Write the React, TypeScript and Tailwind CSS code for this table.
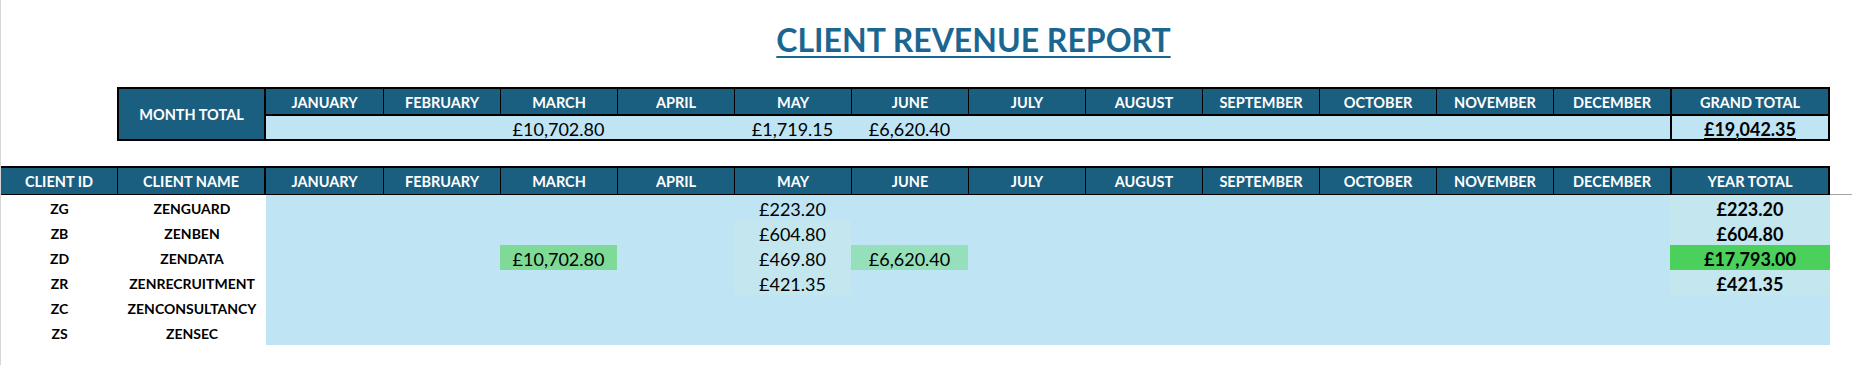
import React from 'react';

const MONTHS = ['JANUARY','FEBRUARY','MARCH','APRIL','MAY','JUNE','JULY','AUGUST','SEPTEMBER','OCTOBER','NOVEMBER','DECEMBER'];

const MONTH_TOTALS: Record<string, string> = { MARCH: '£10,702.80', MAY: '£1,719.15', JUNE: '£6,620.40' };

type Cell = { v: string; bg?: string };
type Row = { id: string; name: string; cells: Record<string, Cell>; total?: Cell };

const ROWS: Row[] = [
  { id: 'ZG', name: 'ZENGUARD', cells: { MAY: { v: '£223.20' } }, total: { v: '£223.20', bg: 'tint' } },
  { id: 'ZB', name: 'ZENBEN', cells: { MAY: { v: '£604.80', bg: 'tint' } }, total: { v: '£604.80', bg: 'tint' } },
  { id: 'ZD', name: 'ZENDATA', cells: { MARCH: { v: '£10,702.80', bg: 'green' }, MAY: { v: '£469.80', bg: 'tint' }, JUNE: { v: '£6,620.40', bg: 'mint' } }, total: { v: '£17,793.00', bg: 'bright' } },
  { id: 'ZR', name: 'ZENRECRUITMENT', cells: { MAY: { v: '£421.35', bg: 'tint' } }, total: { v: '£421.35', bg: 'tint' } },
  { id: 'ZC', name: 'ZENCONSULTANCY', cells: {} },
  { id: 'ZS', name: 'ZENSEC', cells: {} },
];

function bgClass(bg?: string) {
  if (bg === 'green') return 'bg-[#7fd997]';
  if (bg === 'mint') return 'bg-[#95dfba]';
  if (bg === 'bright') return 'bg-[#4bd05b]';
  if (bg === 'tint') return 'bg-[#c3e6ef]';
  return '';
}

export default function App() {
  return (
    <div className="w-[1852px] h-[365px] bg-white border-l border-[#d6d6d6] overflow-hidden [font-family:Lato,'Open_Sans',sans-serif] text-black">
      {/* Title */}
      <div className="ml-[116px] w-[1713px] h-[87px] pt-[24px] flex justify-center">
        <div className="h-[40px] text-[32px] leading-none font-bold text-[#1b6690] underline decoration-2 underline-offset-[4px]">
          CLIENT REVENUE REPORT
        </div>
      </div>

      {/* Month totals table */}
      <div className="ml-[116px] w-[1713px] h-[54px] border-2 border-black flex">
        <div className="w-[147px] border-r-2 border-black bg-[#1a5e80] text-white font-bold text-[14.5px] leading-none flex items-center justify-center pt-[2px]">
          MONTH TOTAL
        </div>
        <div className="w-[1404px] flex flex-col">
          <div className="h-[27px] flex border-b-2 border-black bg-[#1a5e80]">
            {MONTHS.map((m, i) => (
              <div
                key={m}
                className={i > 0 ? 'w-[117px] border-l border-black text-white font-bold text-[14.5px] leading-none flex items-center justify-center pt-[3px]' : 'w-[117px] text-white font-bold text-[14.5px] leading-none flex items-center justify-center pt-[3px]'}
              >
                {m}
              </div>
            ))}
          </div>
          <div className="h-[23px] flex bg-[#bfe4f4]">
            {MONTHS.map((m) => (
              <div key={m} className="w-[117px] flex items-center justify-center pt-[3px] text-[18px] leading-none">
                {MONTH_TOTALS[m] ?? ''}
              </div>
            ))}
          </div>
        </div>
        <div className="flex-1 border-l-2 border-black flex flex-col">
          <div className="h-[27px] border-b-2 border-black bg-[#1a5e80] text-white font-bold text-[14.5px] leading-none flex items-center justify-center pt-[3px]">
            GRAND TOTAL
          </div>
          <div className="h-[23px] bg-[#bfe4f4] flex items-center justify-center pt-[3px] text-[18px] leading-none font-bold">
            <span className="underline decoration-1 underline-offset-[2px]">£19,042.35</span>
          </div>
        </div>
      </div>

      {/* Client table */}
      <div className="mt-[25px] flex">
        <div className="w-[1829px]">
          <div className="h-[29px] flex border-t-2 border-b border-black bg-[#1a5e80] text-white font-bold text-[14.5px] leading-none">
            <div className="w-[117px] border-r border-black flex items-center justify-center pt-[3px]">CLIENT ID</div>
            <div className="w-[148px] border-r-2 border-black flex items-center justify-center pt-[3px]">CLIENT NAME</div>
            {MONTHS.map((m, i) => (
              <div
                key={m}
                className={i > 0 ? 'w-[117px] border-l border-black flex items-center justify-center pt-[3px]' : 'w-[117px] flex items-center justify-center pt-[3px]'}
              >
                {m}
              </div>
            ))}
            <div className="flex-1 border-l-2 border-r-2 border-black flex items-center justify-center pt-[3px]">YEAR TOTAL</div>
          </div>
          {ROWS.map((r) => (
            <div key={r.id} className="h-[25px] flex">
              <div className="w-[117px] bg-white flex items-center justify-center pt-[2px] font-bold text-[14px] leading-none">{r.id}</div>
              <div className="w-[148px] bg-white flex items-center justify-center pt-[2px] font-bold text-[14px] leading-none">{r.name}</div>
              {MONTHS.map((m) => {
                const c = r.cells[m];
                return (
                  <div
                    key={m}
                    className={`w-[117px] flex items-center justify-center pt-[2px] text-[18px] leading-none ${c?.bg ? bgClass(c.bg) : 'bg-[#bfe4f4]'}`}
                  >
                    {c?.v ?? ''}
                  </div>
                );
              })}
              <div
                className={`flex-1 flex items-center justify-center pt-[2px] text-[18px] leading-none font-bold ${r.total?.bg ? bgClass(r.total.bg) : 'bg-[#bfe4f4]'}`}
              >
                {r.total?.v ?? ''}
              </div>
            </div>
          ))}
        </div>
        <div className="flex-1">
          <div className="mt-[28px] h-px bg-[#a6a6a6]" />
        </div>
      </div>
    </div>
  );
}
